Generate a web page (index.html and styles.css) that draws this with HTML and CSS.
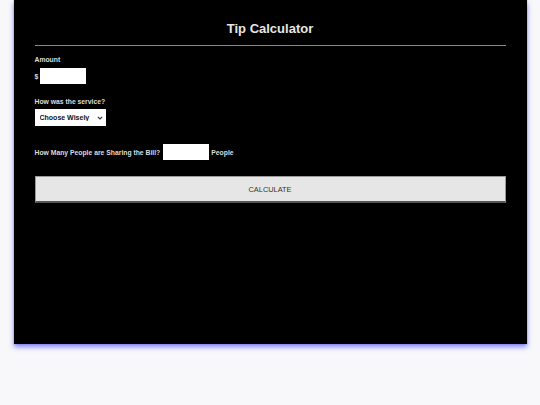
FILE: index.html
```html
<!DOCTYPE html>
<html>
<head>
<meta charset="utf-8">
<link rel="stylesheet" href="styles.css">
</head>
<body>
<div class="card">
  <h1 class="title">Tip Calculator</h1>
  <hr class="rule">
  <div class="label">Amount</div>
  <div class="row">
    <span class="label">$</span>
    <input class="field" type="text">
  </div>
  <div class="label service">How was the service?</div>
  <div class="select-wrap">
    <select class="select">
      <option>Choose Wisely</option>
    </select>
    <svg class="chev" width="6" height="4" viewBox="0 0 6 4"><path d="M0.8 0.8 L3 3 L5.2 0.8" fill="none" stroke="#333" stroke-width="1.1"/></svg>
  </div>
  <div class="row people">
    <span class="label">How Many People are Sharing the Bill?</span>
    <input class="field" type="text">
    <span class="label">People</span>
  </div>
  <button class="calc">CALCULATE</button>
</div>
</body>
</html>
```
FILE: styles.css
```css
html, body {
  margin: 0;
  padding: 0;
  background: #f8f8fa;
  font-family: "Liberation Sans", Arial, sans-serif;
}
body {
  min-height: 405px;
}
.card {
  width: 513px;
  height: 344px;
  margin: 0 auto;
  box-sizing: border-box;
  padding: 21px 21px 0;
  background: #000;
  box-shadow: 0 3px 5px rgba(80, 80, 250, 0.7), 0 0 1px rgba(80, 80, 200, 0.6);
}
.title {
  margin: 0;
  font-size: 13px;
  line-height: 15px;
  font-weight: bold;
  text-align: center;
  color: #e6e6e6;
}
.rule {
  margin: 9px 0 0;
  border: 0;
  border-top: 1px solid #8a8a8a;
  height: 0;
}
.label {
  font-size: 6.8px;
  line-height: 9px;
  font-weight: bold;
  color: #dcdcdc;
}
.rule + .label {
  margin-top: 9px;
}
.row {
  display: flex;
  align-items: center;
  margin-top: 4px;
  gap: 2px;
}
.field {
  width: 46px;
  height: 16px;
  box-sizing: border-box;
  border: 0;
  margin: 0;
  padding: 0;
  background: #fff;
}
.service {
  margin-top: 13px;
}
.select-wrap {
  position: relative;
  width: 71px;
  height: 17px;
  margin-top: 3px;
}
.select {
  display: block;
  appearance: none;
  -webkit-appearance: none;
  width: 71px;
  height: 17px;
  margin: 0;
  padding: 0 0 0 5px;
  border: 0;
  border-radius: 0;
  background: #fff;
  font-family: "Liberation Sans", Arial, sans-serif;
  font-size: 7px;
  font-weight: bold;
  color: #111;
}
.chev {
  position: absolute;
  right: 3px;
  top: 7px;
}
.people {
  margin-top: 18px;
}
.people .field {
  margin-left: 1px;
}
.calc {
  display: block;
  width: 100%;
  height: 27px;
  margin: 16px 0 0;
  padding: 0;
  box-sizing: border-box;
  background: #e6e6e6;
  border: 1px solid #9a9a9a;
  border-bottom: 2px solid #555;
  font-family: "Liberation Sans", Arial, sans-serif;
  font-size: 7.4px;
  color: #333;
}
```
